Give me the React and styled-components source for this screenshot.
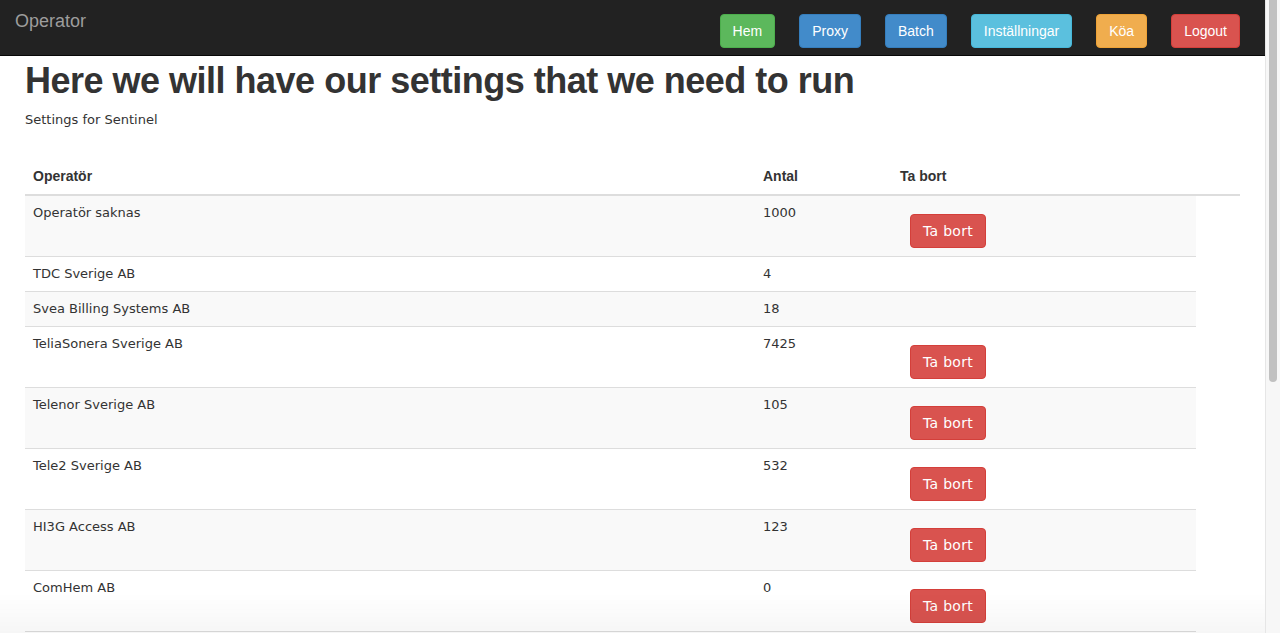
import styled, { createGlobalStyle } from "styled-components";

const GlobalStyle = createGlobalStyle`
  body {
    margin: 0;
    background: #fff;
    color: #333;
    font-family: "DejaVu Sans", Verdana, sans-serif;
    font-size: 13px;
    line-height: 1.428571;
  }
`;

const operators = [
  { name: "Operatör saknas", count: 1000, remove: true },
  { name: "TDC Sverige AB", count: 4, remove: false },
  { name: "Svea Billing Systems AB", count: 18, remove: false },
  { name: "TeliaSonera Sverige AB", count: 7425, remove: true },
  { name: "Telenor Sverige AB", count: 105, remove: true },
  { name: "Tele2 Sverige AB", count: 532, remove: true },
  { name: "HI3G Access AB", count: 123, remove: true },
  { name: "ComHem AB", count: 0, remove: true },
];

const navButtons = [
  { label: "Hem", color: "#5cb85c", border: "#4cae4c" },
  { label: "Proxy", color: "#428bca", border: "#357ebd" },
  { label: "Batch", color: "#428bca", border: "#357ebd" },
  { label: "Inställningar", color: "#5bc0de", border: "#46b8da" },
  { label: "Köa", color: "#f0ad4e", border: "#eea236" },
  { label: "Logout", color: "#d9534f", border: "#d43f3a" },
];

export default function App() {
  return (
    <>
      <GlobalStyle />
      <Navbar>
        <Brand>Operator</Brand>
        <NavButtons>
          {navButtons.map((b) => (
            <Button key={b.label} $bg={b.color} $border={b.border}>
              {b.label}
            </Button>
          ))}
        </NavButtons>
      </Navbar>

      <Content>
        <Title>Here we will have our settings that we need to run</Title>
        <Lead>Settings for Sentinel</Lead>

        <Table>
          <colgroup>
            <col style={{ width: 730 }} />
            <col style={{ width: 137 }} />
            <col style={{ width: 304 }} />
            <col />
          </colgroup>
          <thead>
            <tr>
              <Th>Operatör</Th>
              <Th>Antal</Th>
              <Th>Ta bort</Th>
              <Th />
            </tr>
          </thead>
          <tbody>
            {operators.map((op) => (
              <Row key={op.name}>
                <Td>{op.name}</Td>
                <Td>{op.count}</Td>
                <Td>
                  {op.remove && (
                    <RemoveButton $bg="#d9534f" $border="#d43f3a">
                      Ta bort
                    </RemoveButton>
                  )}
                </Td>
              </Row>
            ))}
          </tbody>
        </Table>
      </Content>

      <BottomFade />
      <ScrollTrack>
        <ScrollThumb />
      </ScrollTrack>
    </>
  );
}

const Navbar = styled.nav`
  display: flex;
  justify-content: space-between;
  align-items: flex-start;
  height: 55px;
  background: #222;
  border-bottom: 1px solid #080808;
  padding: 0 40px 0 15px;
`;

const Brand = styled.a`
  font-family: "Liberation Sans", Arial, sans-serif;
  font-size: 18px;
  line-height: 20px;
  color: #9d9d9d;
  padding-top: 11px;
`;

const NavButtons = styled.div`
  display: flex;
  gap: 24px;
  padding-top: 14px;
`;

const Button = styled.button`
  font-family: "Liberation Sans", Arial, sans-serif;
  font-size: 14px;
  line-height: 20px;
  padding: 6px 12px;
  color: #fff;
  background: ${(p) => p.$bg};
  border: 1px solid ${(p) => p.$border};
  border-radius: 4px;
  cursor: pointer;
`;

const RemoveButton = styled(Button)`
  font-family: "DejaVu Sans", Verdana, sans-serif;
  letter-spacing: 0.3px;
  margin: 10px 0 0 10px;
`;

const Content = styled.main`
  padding: 0 40px 0 25px;
`;

const Title = styled.h1`
  font-family: "Liberation Sans", Arial, sans-serif;
  font-size: 36px;
  font-weight: bold;
  letter-spacing: -0.5px;
  line-height: 1.1;
  margin: 5px 0 10px;
  color: #333;
`;

const Lead = styled.p`
  margin: 0;
`;

const Table = styled.table`
  width: 100%;
  table-layout: fixed;
  border-collapse: collapse;
  border-spacing: 0;
  margin: 29px 0 0;
`;

const Th = styled.th`
  font-family: "Liberation Sans", Arial, sans-serif;
  font-size: 14px;
  font-weight: bold;
  line-height: 20px;
  text-align: left;
  padding: 8px;
  border-bottom: 2px solid #ddd;
`;

const Row = styled.tr`
  &:nth-child(odd) > td {
    background: #f9f9f9;
  }
  &:last-child > td {
    border-bottom: 1px solid #ddd;
  }
`;

const Td = styled.td`
  padding: 8px;
  vertical-align: top;
  border-top: 1px solid #ddd;
  line-height: 18px;
`;

const BottomFade = styled.div`
  position: fixed;
  left: 0;
  right: 15px;
  bottom: 0;
  height: 40px;
  pointer-events: none;
  background: linear-gradient(to bottom, rgba(0, 0, 0, 0), rgba(0, 0, 0, 0.035));
`;

const ScrollTrack = styled.div`
  position: fixed;
  top: 0;
  right: 0;
  bottom: 0;
  width: 14px;
  background: #f7f7f7;
  border-left: 1px solid #e6e6e6;
`;

const ScrollThumb = styled.div`
  margin: 0 3px 0 3px;
  height: 382px;
  background: #c1c1c1;
  border-radius: 0 0 4px 4px;
`;
